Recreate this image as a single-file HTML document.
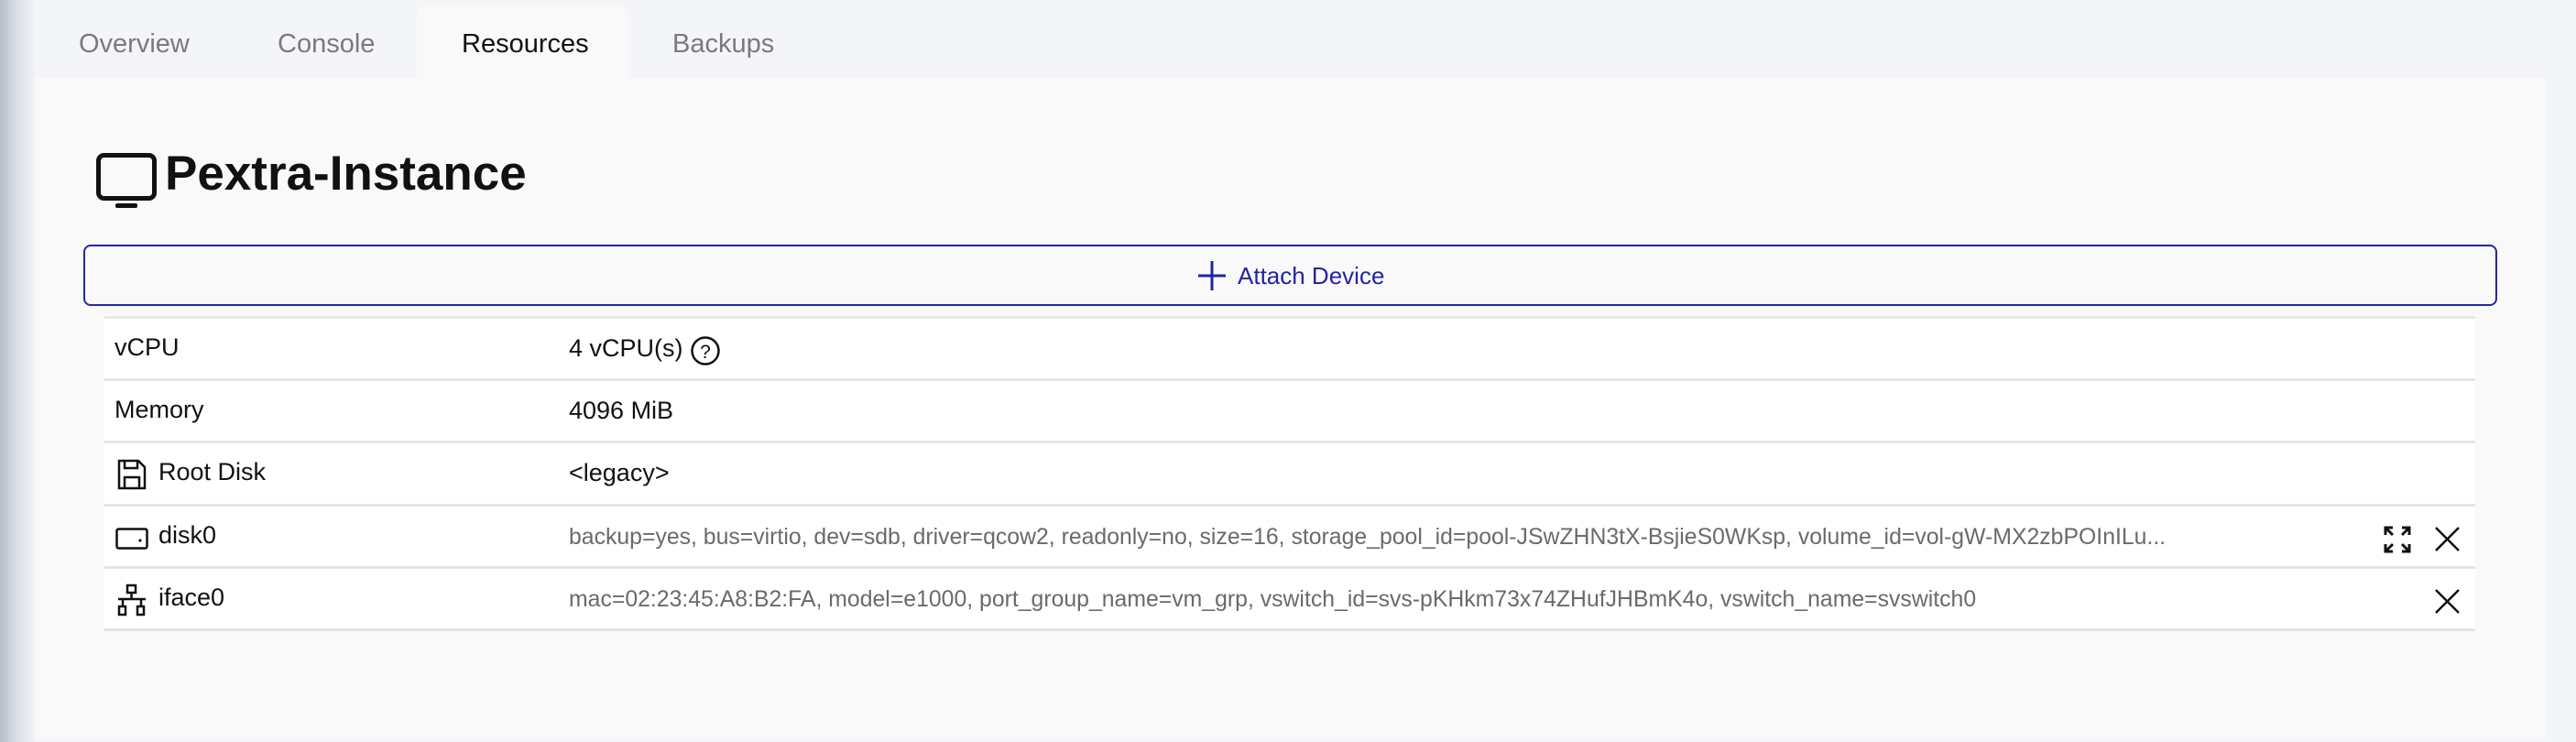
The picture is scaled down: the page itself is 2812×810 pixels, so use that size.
<!DOCTYPE html>
<html><head><meta charset="utf-8"><style>
*{margin:0;padding:0;box-sizing:border-box}
body{width:2812px;height:810px;overflow:hidden;background:#f4f5f8;font-family:"Liberation Sans",sans-serif;position:relative}
.strip{position:absolute;left:0;top:0;width:38px;height:810px;background:linear-gradient(90deg,#b6bcc9,#dde0e7 50%,#f1f2f6)}
.tab{position:absolute;top:32px;font-size:29px;color:#7a7a7a}
.active{position:absolute;left:455px;top:5px;width:231px;height:85px;background:#f9f9fa;border-radius:12px 12px 0 0}
.panel{position:absolute;left:38px;top:85px;width:2740px;height:722px;background:#f9f9fa}
.title{position:absolute;left:180px;top:159px;font-size:53px;font-weight:bold;color:#111}
.btn{position:absolute;left:91px;top:267px;width:2635px;height:67px;border:2px solid #2626a3;border-radius:8px;background:#f9f9fa}
.btn span{position:absolute;left:1258px;top:17px;font-size:26px;color:#2424a0}
.table{position:absolute;left:114px;top:345px;width:2588px;background:#fff;border-top:3px solid #e5e7ea}
.row{position:relative;height:68.2px;border-bottom:3px solid #e2e4e8}
.lbl{position:absolute;left:11px;top:16px;font-size:27px;color:#111}
.lbl.ic{left:59px}
.val{position:absolute;left:507px;top:17px;font-size:27px;color:#111}
.val.s{font-size:24.8px;color:#6a6a6a;top:20px}
svg{position:absolute}
</style></head><body>
<div class="strip"></div>
<div class="active"></div>
<div class="panel"></div>
<div class="tab" style="left:86px">Overview</div>
<div class="tab" style="left:303px">Console</div>
<div class="tab" style="left:504px;color:#111">Resources</div>
<div class="tab" style="left:734px">Backups</div>

<svg style="left:105px;top:167px" width="66" height="62" viewBox="0 0 66 62"><rect x="2.5" y="2.5" width="61" height="47" rx="6" fill="none" stroke="#111" stroke-width="5"/><rect x="21" y="55" width="24" height="5" rx="2" fill="#111"/></svg>
<div class="title">Pextra-Instance</div>

<div class="btn"><svg style="left:1214px;top:15px" width="32" height="34" viewBox="0 0 32 34"><path d="M16 1V33M1 17H31" stroke="#2424a0" stroke-width="3"/></svg><span>Attach Device</span></div>

<div class="table">
<div class="row"><div class="lbl">vCPU</div><div class="val">4 vCPU(s)</div>
<svg style="left:639px;top:18px" width="34" height="34" viewBox="0 0 34 34"><circle cx="17" cy="17" r="14.5" fill="none" stroke="#111" stroke-width="2.5"/><text x="17" y="25" font-size="21" text-anchor="middle" font-family="Liberation Sans" fill="#111">?</text></svg></div>
<div class="row"><div class="lbl">Memory</div><div class="val">4096 MiB</div></div>
<div class="row"><svg style="left:14px;top:17px" width="32" height="34" viewBox="0 0 32 34"><path d="M2 2H23L30 9V32H2Z M8 2V10H22V2 M8 32V20H24V32" fill="none" stroke="#111" stroke-width="2.5"/></svg><div class="lbl ic">Root Disk</div><div class="val">&lt;legacy&gt;</div></div>
<div class="row"><svg style="left:12px;top:23px" width="36" height="24" viewBox="0 0 36 24"><rect x="1.5" y="1.5" width="33" height="21" rx="2" fill="none" stroke="#111" stroke-width="2.5"/><circle cx="27" cy="14" r="1.6" fill="#111"/></svg><div class="lbl ic">disk0</div><div class="val s">backup=yes, bus=virtio, dev=sdb, driver=qcow2, readonly=no, size=16, storage_pool_id=pool-JSwZHN3tX-BsjieS0WKsp, volume_id=vol-gW-MX2zbPOInILu...</div>
<svg style="left:2488px;top:21px" width="30" height="30" viewBox="0 0 30 30" fill="none" stroke="#111" stroke-width="3"><path d="M2 10V2H10M2 2L10 10M28 10V2H20M28 2L20 10M2 20V28H10M2 28L10 20M28 20V28H20M28 28L20 20"/></svg>
<svg style="left:2544px;top:22px" width="27" height="27" viewBox="0 0 27 27"><path d="M1 1L26 26M26 1L1 26" stroke="#111" stroke-width="2.5"/></svg></div>
<div class="row"><svg style="left:12px;top:16px" width="36" height="36" viewBox="0 0 36 36" fill="none" stroke="#111" stroke-width="2.5"><rect x="13" y="2" width="9" height="8"/><path d="M17.5 10V17M3 17H33M8 17V25M28 17V25"/><rect x="4" y="25" width="7" height="9"/><rect x="24" y="25" width="7" height="9"/></svg><div class="lbl ic">iface0</div><div class="val s">mac=02:23:45:A8:B2:FA, model=e1000, port_group_name=vm_grp, vswitch_id=svs-pKHkm73x74ZHufJHBmK4o, vswitch_name=svswitch0</div>
<svg style="left:2544px;top:22px" width="27" height="27" viewBox="0 0 27 27"><path d="M1 1L26 26M26 1L1 26" stroke="#111" stroke-width="2.5"/></svg></div>
</div>
</body></html>
